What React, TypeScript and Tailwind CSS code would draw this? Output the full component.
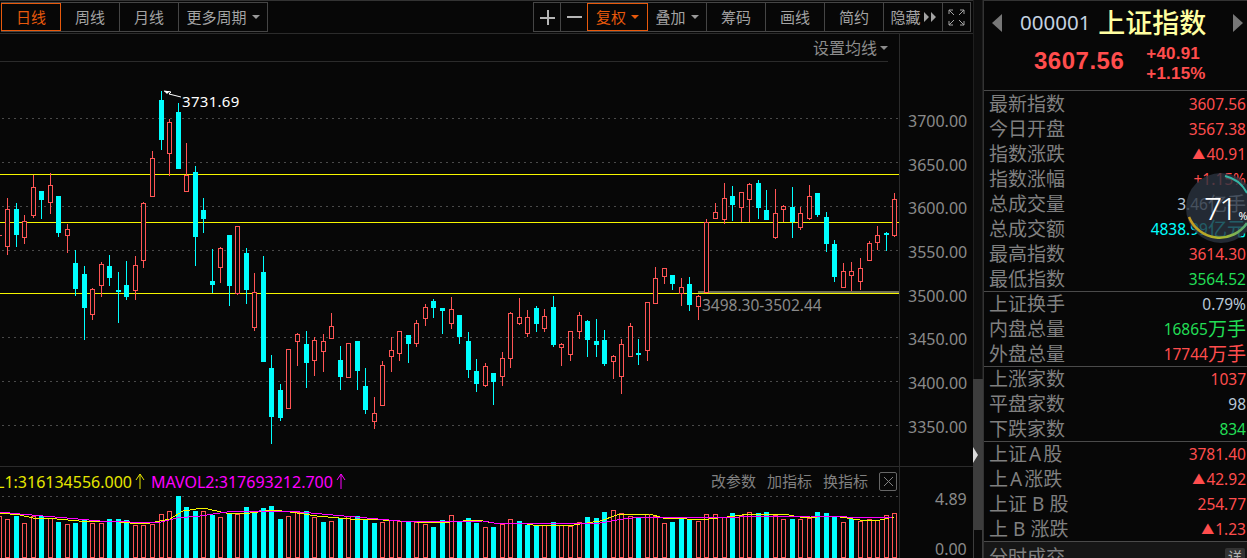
import type { ReactNode } from "react"

// [up, wickTop, bodyTop, bodyBottom, wickBottom]
const candles: [number, number, number, number, number][] = [
  [1, 198, 209, 246, 255], [0, 203, 209, 235, 247], [1, 215, 221, 237, 244], [1, 175, 187, 215, 218],
  [0, 191, 191, 200, 219], [1, 173, 185, 202, 214], [0, 196, 196, 233, 237], [1, 224, 229, 235, 253],
  [0, 250, 263, 289, 296], [0, 266, 274, 308, 340], [1, 288, 289, 314, 320], [1, 262, 264, 285, 297],
  [0, 255, 266, 278, 286], [0, 272, 290, 292, 323], [0, 261, 285, 297, 300], [1, 256, 265, 290, 300],
  [1, 202, 203, 260, 268], [1, 151, 158, 196, 196], [0, 91, 100, 140, 150], [1, 119, 122, 153, 176],
  [0, 103, 112, 169, 169], [1, 143, 175, 191, 191], [0, 166, 172, 237, 266], [0, 198, 210, 219, 233],
  [0, 249, 281, 285, 293], [1, 247, 248, 267, 283], [0, 235, 235, 286, 306], [1, 226, 226, 293, 295],
  [0, 248, 253, 290, 304], [1, 273, 292, 327, 331], [0, 256, 272, 362, 362], [0, 355, 368, 417, 444],
  [0, 384, 390, 418, 421], [1, 349, 349, 408, 408], [1, 333, 334, 341, 366], [0, 331, 344, 363, 388],
  [1, 337, 340, 360, 376], [1, 334, 341, 351, 372], [1, 313, 326, 338, 338], [0, 346, 360, 377, 390],
  [1, 343, 343, 377, 377], [0, 341, 341, 371, 390], [0, 368, 386, 410, 414], [1, 397, 413, 421, 429],
  [1, 361, 365, 405, 405], [1, 337, 350, 356, 372], [1, 331, 331, 353, 361], [0, 335, 335, 344, 363],
  [1, 320, 323, 343, 347], [1, 304, 307, 318, 326], [0, 299, 301, 308, 318], [0, 308, 308, 311, 334],
  [1, 297, 309, 323, 329], [0, 315, 315, 337, 344], [0, 332, 341, 370, 378], [0, 359, 371, 384, 392],
  [1, 363, 366, 385, 387], [0, 373, 373, 382, 405], [1, 352, 358, 376, 386], [1, 312, 313, 358, 368],
  [1, 298, 317, 323, 325], [1, 310, 317, 333, 337], [0, 306, 308, 324, 332], [1, 309, 316, 328, 332],
  [0, 296, 307, 345, 347], [1, 343, 344, 347, 366], [1, 331, 331, 354, 361], [1, 312, 315, 331, 339],
  [0, 320, 321, 340, 357], [0, 319, 341, 345, 357], [0, 330, 340, 364, 366], [1, 355, 356, 361, 379],
  [1, 339, 344, 376, 394], [1, 323, 326, 356, 356], [0, 339, 353, 355, 365], [1, 302, 302, 350, 361],
  [1, 267, 278, 303, 303], [1, 268, 268, 276, 284], [0, 275, 275, 284, 290], [1, 278, 287, 293, 306],
  [0, 277, 284, 305, 311], [1, 295, 296, 306, 320], [1, 219, 222, 292, 292], [1, 203, 212, 218, 219],
  [1, 183, 198, 219, 224], [0, 186, 196, 205, 221], [1, 192, 192, 207, 222], [1, 183, 184, 199, 222],
  [0, 180, 183, 208, 219], [0, 190, 210, 220, 220], [1, 189, 213, 237, 239], [1, 205, 206, 209, 222],
  [0, 187, 207, 222, 238], [1, 207, 213, 227, 230], [1, 185, 196, 218, 220], [0, 193, 193, 215, 217],
  [0, 212, 217, 244, 252], [0, 240, 244, 277, 282], [1, 263, 271, 287, 287], [1, 262, 271, 275, 291],
  [1, 258, 268, 281, 290], [1, 241, 243, 260, 261], [1, 226, 235, 242, 250], [0, 232, 233, 235, 251],
  [1, 193, 199, 235, 237],
]

// [up, top of the bar]
const volumes: [number, number][] = [
  [1, 519], [0, 516], [1, 523], [1, 516], [0, 516], [1, 518], [0, 522], [1, 524], [0, 523], [0, 520],
  [1, 523], [1, 523], [0, 519], [0, 519], [0, 520], [1, 525], [1, 525], [1, 524], [1, 514], [1, 511],
  [0, 496], [0, 507], [0, 511], [1, 511], [0, 515], [1, 517], [0, 514], [1, 514], [0, 507], [0, 512],
  [0, 508], [0, 506], [0, 519], [1, 516], [1, 512], [0, 511], [1, 517], [0, 522], [1, 521], [0, 518],
  [1, 516], [0, 516], [0, 519], [0, 523], [1, 522], [1, 520], [1, 521], [0, 522], [1, 522], [1, 524],
  [0, 527], [0, 520], [1, 515], [0, 522], [0, 518], [0, 523], [1, 527], [0, 527], [1, 524], [1, 519],
  [0, 521], [0, 525], [0, 525], [1, 525], [0, 522], [1, 525], [1, 526], [1, 522], [0, 517], [0, 518],
  [0, 512], [1, 510], [1, 513], [1, 516], [0, 517], [1, 514], [1, 516], [1, 523], [0, 522], [0, 517],
  [0, 520], [1, 521], [1, 514], [1, 514], [1, 517], [0, 513], [1, 515], [1, 512], [0, 513], [0, 512],
  [1, 515], [1, 519], [0, 519], [1, 519], [1, 518], [0, 512], [0, 513], [0, 517], [1, 522], [0, 519],
  [1, 521], [1, 519], [1, 520], [1, 515], [1, 513],
]

const maYellow = "0,513 20,515 33,518 57,519 90,522 107,521 130,523 150,523 170,519 183,511 203,508 217,511 230,514 250,513 273,510 290,512 317,516 350,519 383,520 417,522 450,522 477,520 500,524 520,523 533,525 567,526 587,523 600,521 617,515 650,514 663,518 687,519 700,520 727,517 750,514 783,514 800,517 817,517 833,516 867,521 880,520 894,517"
const maMagenta = "0,512 20,514 43,516 67,518 100,521 130,522 157,523 177,518 200,516 227,512 260,511 300,512 333,515 367,518 400,521 450,522 483,521 500,524 517,523 550,523 573,524 600,523 623,519 643,517 683,517 707,518 740,517 767,516 797,516 810,516 847,517 860,518 893,517"

const gridLines = [118.5, 162.5, 206.5, 250.5, 337.5, 381.5, 425.5]
const yellowLines = [174.5, 222.5, 293.5]
const axisLabels = ["3700.00", "3650.00", "3600.00", "3550.00", "3500.00", "3450.00", "3400.00", "3350.00"]

const RED = "#ff5555"
const CYAN = "#00ffff"
const cjk = "font-['Noto_Sans','Noto_Sans_CJK_SC',sans-serif]"

const candleX = (i: number) => Math.floor(7.5 + 8.53 * i)

function Caret({ orange }: { orange?: boolean }) {
  return (
    <span
      className={`ml-[5px] inline-block h-0 w-0 border-x-[4px] border-t-[4px] border-x-transparent ${orange ? "border-t-[#e8590c]" : "border-t-[#999999]"}`}
    />
  )
}

function ToolButton({ w, active, children }: { w: string; active?: boolean; children: ReactNode }) {
  return (
    <div
      className={`flex h-[28px] items-center justify-center border-r text-[15px] ${w} ${active ? "-ml-px border border-[#e8590c] text-[#e8590c]" : "border-[#454545] text-[#a3a3a3]"}`}
    >
      {children}
    </div>
  )
}

function Toolbar() {
  return (
    <div className="flex h-[34px] shrink-0 items-center justify-between border-t border-b border-t-[#333333] border-b-[#2b2b2b] pl-px pr-[2px]">
      <div className="flex border border-[#454545]">
        <ToolButton w="w-[60px]" active>日线</ToolButton>
        <ToolButton w="w-[59px]">周线</ToolButton>
        <ToolButton w="w-[59px]">月线</ToolButton>
        <div className="flex h-[28px] w-[88px] items-center justify-center text-[15px] text-[#a3a3a3]">
          更多周期
          <Caret />
        </div>
      </div>
      <div className="flex border border-[#454545]">
        <ToolButton w="w-[27px]">
          <svg width="15" height="15" viewBox="0 0 15 15" shapeRendering="crispEdges">
            <path d="M0 6.5h15v2H0zM6.5 0h2v15h-2z" fill="#b5b5b5" />
          </svg>
        </ToolButton>
        <ToolButton w="w-[27px]">
          <svg width="15" height="2" viewBox="0 0 15 2" shapeRendering="crispEdges">
            <rect width="15" height="2" fill="#b5b5b5" />
          </svg>
        </ToolButton>
        <ToolButton w="w-[61px]" active>
          复权
          <Caret orange />
        </ToolButton>
        <ToolButton w="w-[59px]">
          叠加
          <Caret />
        </ToolButton>
        <ToolButton w="w-[59px]">筹码</ToolButton>
        <ToolButton w="w-[59px]">画线</ToolButton>
        <ToolButton w="w-[59px]">简约</ToolButton>
        <ToolButton w="w-[59px]">
          隐藏
          <svg width="12" height="10" viewBox="0 0 12 10" className="ml-[3px]">
            <path d="M0 0l5 5-5 5zM7 0l5 5-5 5z" fill="#a3a3a3" />
          </svg>
        </ToolButton>
        <div className="flex h-[28px] w-[27px] items-center justify-center">
          <svg width="17" height="17" viewBox="0 0 17 17" fill="none" stroke="#a3a3a3" strokeWidth="1">
            <path d="M1 5V1h4M1 1l5 5M12 1h4v4M16 1l-5 5M1 12v4h4M1 16l5-5M12 16h4v-4M16 16l-5-5" />
          </svg>
        </div>
      </div>
    </div>
  )
}

function CandleChart() {
  return (
    <svg className="block h-[404px] w-[899px]" viewBox="0 62 899 404" shapeRendering="crispEdges">
      {gridLines.map((y) => (
        <line key={y} x1="2" x2="898" y1={y} y2={y} stroke="#4a4a4a" strokeDasharray="1.5 4.5" />
      ))}
      {yellowLines.map((y) => (
        <line key={y} x1="0" x2="899" y1={y} y2={y} stroke="#f5f500" />
      ))}
      <rect x="698" y="291" width="201" height="2" fill="#6e6e5a" />
      <rect x="0" y="235" width="2" height="1" fill={RED} />
      {candles.map(([up, wt, bt, bb, wb], i) => {
        const x = candleX(i)
        const color = up ? RED : CYAN
        return (
          <g key={i}>
            <rect x={x} y={wt} width="1" height={wb - wt} fill={color} />
            {up ? (
              <rect x={x - 2 + 0.5} y={bt + 0.5} width="4" height={bb - bt} fill="#070707" stroke={color} />
            ) : (
              <rect x={x - 2} y={bt} width="5" height={Math.max(bb - bt, 2)} fill={color} />
            )}
          </g>
        )
      })}
      <g shapeRendering="auto">
        <path d="M164 91l7 1-2 2 12 3" fill="none" stroke="#ffffff" strokeWidth="1" />
        <path d="M164 91l6 0-3 3z" fill="#ffffff" />
      </g>
    </svg>
  )
}

function VolumeChart() {
  return (
    <svg className="block h-[62px] w-[899px]" viewBox="0 496 899 62" shapeRendering="crispEdges">
      <line x1="2" x2="898" y1="496.5" y2="496.5" stroke="#4a4a4a" strokeDasharray="1.5 4.5" />
      <rect x="-2.5" y="516.5" width="4" height="44" fill="none" stroke={RED} />
      {volumes.map(([up, top], i) => {
        const x = candleX(i)
        return up ? (
          <rect key={i} x={x - 1.5} y={top + 0.5} width="4" height={557 - top} fill="#070707" stroke={RED} />
        ) : (
          <rect key={i} x={x - 2} y={top} width="5" height={558 - top} fill={CYAN} />
        )
      })}
      <polyline points={maYellow} fill="none" stroke="#f5f500" />
      <polyline points={maMagenta} fill="none" stroke="#ff00ff" />
    </svg>
  )
}

function ChartColumn() {
  return (
    <div className="flex min-h-0 flex-1">
      <div className="flex w-[899px] shrink-0 flex-col">
        <div className="mr-[11px] flex h-[28px] shrink-0 items-center justify-end border-b border-[#2b2b2b] text-[16px] text-[#8c8c8c]">
          设置均线
          <span className="ml-[3px] h-0 w-0 border-x-[4px] border-t-[4px] border-x-transparent border-t-[#8c8c8c]" />
        </div>
        <div className="relative h-[404px] shrink-0">
          <CandleChart />
          <span className="absolute left-[182px] top-[29px] text-[15px] leading-[20px] tracking-[0.3px] text-white">3731.69</span>
          <span className="absolute left-[702px] top-[233px] text-[15.5px] leading-[20px] text-[#8a8a8a]">3498.30-3502.44</span>
        </div>
        <div className="flex h-[30px] shrink-0 items-center justify-between overflow-hidden border-t border-[#2b2b2b] pr-[2px]">
          <div className="-ml-[4px] flex items-center whitespace-nowrap text-[16px]">
            <span className="text-[#e6e600]">L1:316134556.000</span>
            <svg width="10" height="17" viewBox="0 0 10 17" className="ml-[3px]" fill="none" stroke="#e6e600">
              <path d="M5 16V1M1 7l4-6 4 6" />
            </svg>
            <span className="ml-[6px] text-[#ff00ff]">MAVOL2:317693212.700</span>
            <svg width="10" height="17" viewBox="0 0 10 17" className="ml-[3px]" fill="none" stroke="#ff00ff">
              <path d="M5 16V1M1 7l4-6 4 6" />
            </svg>
          </div>
          <div className="flex items-center gap-[11px] text-[15px] text-[#808080]">
            <span>改参数</span>
            <span>加指标</span>
            <span>换指标</span>
            <span className="flex h-[19px] w-[18px] items-center justify-center rounded-[2px] border border-[#666666]">
              <svg width="11" height="11" viewBox="0 0 11 11" stroke="#808080">
                <path d="M1 1l9 9M10 1l-9 9" />
              </svg>
            </span>
          </div>
        </div>
        <VolumeChart />
      </div>
      <div className="flex w-[74px] shrink-0 flex-col border-l border-[#2b2b2b] text-[16px] text-[#8a8a8a]">
        <div className="h-[432px] shrink-0 pl-[8px] pt-[65px]">
          {axisLabels.map((label) => (
            <div key={label} className="flex h-[43.7px] items-center leading-none">
              {label}
            </div>
          ))}
        </div>
        <div className="flex h-[92px] shrink-0 flex-col justify-between border-t border-[#2b2b2b] pl-[35px] pt-[23px]">
          <div className="leading-[18px]">4.89</div>
          <div className="leading-[18px]">0.00</div>
        </div>
      </div>
    </div>
  )
}

function Scrollbar() {
  return (
    <div className="flex w-[10px] shrink-0 flex-col bg-[#0e0e0e]">
      <div className="h-[379px] shrink-0 border-x border-[#1f1f1f]" />
      <div className="flex h-[151px] shrink-0 items-center bg-[#3d3d3d]">
        <span className="h-0 w-0 border-y-[8px] border-l-[5px] border-y-transparent border-l-[#dcdcdc]" />
      </div>
      <div className="flex-1 border-x border-[#3d3d3d] bg-[#0a0a0a]" />
    </div>
  )
}

type Row = { label: ReactNode; value: ReactNode; color: string }

function Triangle() {
  return <span className="mr-[1px] text-[13px]">▲</span>
}

function Unit({ children }: { children: ReactNode }) {
  return <span className="text-[19px]">{children}</span>
}

const sections: { height: string; rows: Row[] }[] = [
  {
    height: "h-[201px] pt-px",
    rows: [
      { label: "最新指数", value: "3607.56", color: "text-[#ff4d4d]" },
      { label: "今日开盘", value: "3567.38", color: "text-[#ff4d4d]" },
      { label: "指数涨跌", value: <><Triangle />40.91</>, color: "text-[#ff4d4d]" },
      { label: "指数涨幅", value: "+1.15%", color: "text-[#ff4d4d]" },
      { label: "总成交量", value: <>3.46<Unit>亿手</Unit></>, color: "text-[#b8c8d8]" },
      { label: "总成交额", value: <>4838.99<Unit>亿元</Unit></>, color: "text-[#00ffff]" },
      { label: "最高指数", value: "3614.30", color: "text-[#ff4d4d]" },
      { label: "最低指数", value: "3564.52", color: "text-[#22dd55]" },
    ],
  },
  {
    height: "h-[75px]",
    rows: [
      { label: "上证换手", value: "0.79%", color: "text-[#b8c8d8]" },
      { label: "内盘总量", value: <>16865<Unit>万手</Unit></>, color: "text-[#22dd55]" },
      { label: "外盘总量", value: <>17744<Unit>万手</Unit></>, color: "text-[#ff4d4d]" },
    ],
  },
  {
    height: "h-[75px]",
    rows: [
      { label: "上涨家数", value: "1037", color: "text-[#ff4d4d]" },
      { label: "平盘家数", value: "98", color: "text-[#b8c8d8]" },
      { label: "下跌家数", value: "834", color: "text-[#22dd55]" },
    ],
  },
  {
    height: "h-[100px]",
    rows: [
      { label: <>上证<span className="mx-[2px]">A</span>股</>, value: "3781.40", color: "text-[#ff4d4d]" },
      { label: <>上<span className="mx-[2px]">A</span>涨跌</>, value: <><Triangle />42.92</>, color: "text-[#ff4d4d]" },
      { label: <>上证<span className="mx-[5px]">B</span>股</>, value: "254.77", color: "text-[#ff4d4d]" },
      { label: <>上<span className="mx-[5px]">B</span>涨跌</>, value: <><Triangle />1.23</>, color: "text-[#ff4d4d]" },
    ],
  },
]

function Gauge() {
  return (
    <div className="absolute left-[202px] top-[172px] flex h-[70px] w-[70px] items-center rounded-full bg-[#2a3340cc] pl-[18px]">
      <svg width="70" height="70" viewBox="0 0 70 70" fill="none" className="absolute left-0 top-0">
        <defs>
          <linearGradient id="gauge-arc" x1="0" x2="1" y1="0" y2="0">
            <stop offset="0" stopColor="#c89a20" />
            <stop offset="0.6" stopColor="#a8b830" />
            <stop offset="1" stopColor="#50a878" />
          </linearGradient>
        </defs>
        <path d="M39 3A33 33 0 0 1 61 20" stroke="#35b5a5" strokeWidth="2" />
        <path d="M3 44A33 33 0 0 0 61 50" stroke="url(#gauge-arc)" strokeWidth="2.5" />
      </svg>
      <span className="relative text-[32px] font-light leading-none tracking-[-3px] text-white">71</span>
      <span className="relative ml-[4px] mt-[15px] text-[11px] leading-none text-white">%</span>
    </div>
  )
}

function InfoPanel() {
  return (
    <div className="relative flex min-w-0 flex-1 flex-col border-l border-t border-l-[#333333] border-t-[#333333]">
      <div className="h-[90px] shrink-0 border-b border-[#4a4a4a]">
        <div className="flex h-[43px] items-center whitespace-nowrap pl-[8px]">
          <span className="h-0 w-0 shrink-0 border-y-[9px] border-r-[10px] border-y-transparent border-r-[#777777]" />
          <span className="ml-[18px] text-[20.5px] leading-none text-[#c4d2e0]">000001</span>
          <span className="ml-[8px] shrink-0 text-[27px] font-medium leading-none text-[#ffffa0]">上证指数</span>
          <span className="ml-[27px] h-0 w-0 shrink-0 border-y-[9px] border-l-[10px] border-y-transparent border-l-[#777777]" />
        </div>
        <div className="flex items-center pl-[50px]">
          <span className="-mt-[6px] font-['Liberation_Sans',sans-serif] text-[24px] font-bold tracking-[0.5px] text-[#ff4d4d]">3607.56</span>
          <div className="ml-[22px] flex flex-col font-['Liberation_Sans',sans-serif] text-[17px] font-bold leading-[20px] tracking-[0.2px] text-[#ff4d4d]">
            <span>+40.91</span>
            <span>+1.15%</span>
          </div>
        </div>
      </div>
      {sections.map((section, s) => (
        <div key={s} className={`shrink-0 border-b border-[#4a4a4a] ${section.height}`}>
          {section.rows.map((row, i) => (
            <div key={i} className="flex h-[25px] items-center justify-between pl-[5px] pr-px">
              <span className="text-[19px] leading-none text-[#808080]">{row.label}</span>
              <span className={`flex items-center whitespace-nowrap text-[15.5px] leading-none ${row.color}`}>{row.value}</span>
            </div>
          ))}
        </div>
      ))}
      <div className="flex h-[20px] shrink-0 items-start justify-between bg-[#161616] pl-[5px] pr-[2px] pt-[6px]">
        <span className="text-[19px] leading-none text-[#808080]">分时成交</span>
        <span className="rounded-[2px] bg-[#333333] px-[3px] text-[14px] leading-[18px] text-[#b5b5b5]">详</span>
      </div>
      <Gauge />
    </div>
  )
}

export default function App() {
  return (
    <div className={`relative flex h-[558px] w-[1247px] overflow-hidden bg-[#070707] ${cjk}`}>
      <div className="flex w-[973px] shrink-0 flex-col">
        <Toolbar />
        <ChartColumn />
      </div>
      <Scrollbar />
      <InfoPanel />
    </div>
  )
}
